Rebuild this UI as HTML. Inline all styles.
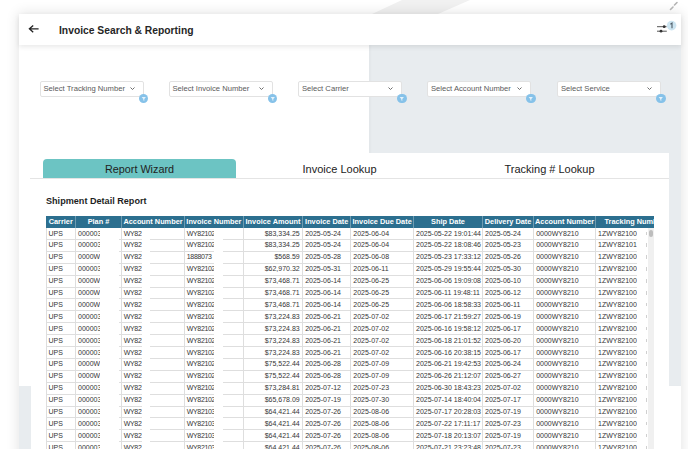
<!DOCTYPE html>
<html><head><meta charset="utf-8">
<style>
*{margin:0;padding:0;box-sizing:border-box}
html,body{width:688px;height:449px;overflow:hidden;background:#fff;font-family:"Liberation Sans",sans-serif;position:relative}
.abs{position:absolute}
#card{position:absolute;left:19px;top:14px;width:662px;height:460px;background:#fff;box-shadow:0 0 12px 1px rgba(0,0,0,0.11)}
#hdr{position:absolute;left:19px;top:14px;width:662px;height:31px;background:#fff;box-shadow:0 2px 5px rgba(0,0,0,0.09);z-index:3}
.title{position:absolute;left:59px;top:25.3px;font-size:10.3px;font-weight:bold;color:#262626;white-space:nowrap;z-index:4}
.grayR{position:absolute;left:369px;top:45px;width:312px;height:341px;background:#e8ecef;box-shadow:inset 2px 0 2px rgba(0,0,0,0.025)}
.grayL{position:absolute;left:19px;top:386px;width:11.5px;height:63px;background:#e8ecef}
.panel{position:absolute;left:31px;top:153px;width:638px;height:300px;background:#fff}
.dd{position:absolute;top:81px;width:104px;height:15.5px;background:#fff;border:1px solid #e2e2e2;border-radius:2px;font-size:7.65px;color:#5a5a5a;line-height:13.5px;padding-left:3px;white-space:nowrap}
.chev{position:absolute;right:7.8px;top:5.4px;width:5px;height:3px}
.badge{position:absolute;width:9.6px;height:9.6px;border-radius:50%;background:#86c2e9;top:93.7px}
.badge svg{display:block}
.tab1{position:absolute;left:43px;top:159px;width:193px;height:19px;background:#6cc4c3;border-radius:4px 4px 0 0}
.tabt{position:absolute;top:162px;font-size:10.8px;color:#222;white-space:nowrap;line-height:14px}
.tabline{position:absolute;left:30px;top:177.5px;width:639px;height:1px;background:#e4e4e4}
.rpt{position:absolute;left:46px;top:195.8px;font-size:9.1px;font-weight:bold;color:#1e1e1e;white-space:nowrap}
.th-bg{position:absolute;background:#2c6f8f}
.th{position:absolute;color:#fff;font-weight:bold;font-size:7.35px;text-align:center;line-height:11.5px;white-space:nowrap;overflow:hidden}
.th-line{position:absolute;width:1px;background:#6d9bb1}
.td{position:absolute;font-size:7px;color:#363636;line-height:12px;white-space:nowrap}
.hl{position:absolute;height:1px;background:#dedede}
.fm{position:absolute;width:1px;height:3.5px;background:#d0d0d0;z-index:2}
.vl{position:absolute;width:1px;background:#dedede}
.redact{position:absolute;background:#fff;top:227.5px;height:230px}
.sbtrack{position:absolute;left:648px;top:227.5px;width:6px;height:230px;background:#f0f0f0}
.sbthumb{position:absolute;left:649px;top:229.5px;width:3.8px;height:7.5px;background:#bdbdbd;border-radius:2px}
#table{position:absolute;left:0;top:0;width:688px;height:449px;overflow:hidden}
</style></head><body>
<svg class="abs" style="left:0;top:0" width="688" height="20"><polygon points="372,14 402,0 470,0 438,14" fill="#f1f1f1"/></svg>
<div id="card"></div>
<div class="grayR"></div>
<div class="grayL"></div>
<div id="hdr"></div>
<svg class="abs" style="left:27px;top:24px;z-index:5" width="14" height="10"><path d="M2.4 4.8 H11.6 M6.2 1.4 L2.4 4.8 L6.2 8.2" stroke="#222" stroke-width="1.3" fill="none"/></svg>
<div class="title">Invoice Search &amp; Reporting</div>
<svg class="abs" style="left:655px;top:19px;z-index:5" width="24" height="16"><path d="M2 7.7 H11.6 M2 12.2 H11.8" stroke="#555" stroke-width="1"/><circle cx="9.2" cy="7.7" r="1.4" fill="#333"/><circle cx="6" cy="12.2" r="1.4" fill="#333"/><circle cx="16.6" cy="6.6" r="4.8" fill="#cde5f1"/><path d="M15.4 5.2 L17 4 V9.2" stroke="#4f5d68" stroke-width="1.1" fill="none"/></svg>
<svg class="abs" style="left:664px;top:0px" width="20" height="14"><path d="M6.5 9.5 L9 7 M10.5 5 L13 2.5" stroke="#b4b4b4" stroke-width="1.6" stroke-linecap="round"/></svg>
<div class="dd" style="left:39.5px">Select Tracking Number<svg class="chev" viewBox="0 0 5 3"><path d="M0.5 0.5 L2.5 2.5 L4.5 0.5" stroke="#666" stroke-width="0.95" fill="none"/></svg></div>
<div class="badge" style="left:138.60000000000002px"><svg width="9.6" height="9.6" viewBox="0 0 10 10"><path d="M2.8 3.2 H7.2 L5.5 5.3 V7.2 L4.5 6.6 V5.3 Z" fill="#e6f3fb"/></svg></div>
<div class="dd" style="left:168.5px">Select Invoice Number<svg class="chev" viewBox="0 0 5 3"><path d="M0.5 0.5 L2.5 2.5 L4.5 0.5" stroke="#666" stroke-width="0.95" fill="none"/></svg></div>
<div class="badge" style="left:267.6px"><svg width="9.6" height="9.6" viewBox="0 0 10 10"><path d="M2.8 3.2 H7.2 L5.5 5.3 V7.2 L4.5 6.6 V5.3 Z" fill="#e6f3fb"/></svg></div>
<div class="dd" style="left:298px">Select Carrier<svg class="chev" viewBox="0 0 5 3"><path d="M0.5 0.5 L2.5 2.5 L4.5 0.5" stroke="#666" stroke-width="0.95" fill="none"/></svg></div>
<div class="badge" style="left:397.1px"><svg width="9.6" height="9.6" viewBox="0 0 10 10"><path d="M2.8 3.2 H7.2 L5.5 5.3 V7.2 L4.5 6.6 V5.3 Z" fill="#e6f3fb"/></svg></div>
<div class="dd" style="left:427px">Select Account Number<svg class="chev" viewBox="0 0 5 3"><path d="M0.5 0.5 L2.5 2.5 L4.5 0.5" stroke="#666" stroke-width="0.95" fill="none"/></svg></div>
<div class="badge" style="left:526.0999999999999px"><svg width="9.6" height="9.6" viewBox="0 0 10 10"><path d="M2.8 3.2 H7.2 L5.5 5.3 V7.2 L4.5 6.6 V5.3 Z" fill="#e6f3fb"/></svg></div>
<div class="dd" style="left:557px">Select Service<svg class="chev" viewBox="0 0 5 3"><path d="M0.5 0.5 L2.5 2.5 L4.5 0.5" stroke="#666" stroke-width="0.95" fill="none"/></svg></div>
<div class="badge" style="left:656.0999999999999px"><svg width="9.6" height="9.6" viewBox="0 0 10 10"><path d="M2.8 3.2 H7.2 L5.5 5.3 V7.2 L4.5 6.6 V5.3 Z" fill="#e6f3fb"/></svg></div>
<div class="panel"></div>
<div class="tab1"></div>
<div class="tabt" style="left:105px">Report Wizard</div>
<div class="tabt" style="left:302.5px;font-size:11px">Invoice Lookup</div>
<div class="tabt" style="left:504.5px;font-size:11px">Tracking # Lookup</div>
<div class="tabline"></div>
<div class="rpt">Shipment Detail Report</div>
<div id="table">
<div class="th-bg" style="left:46px;top:216px;width:607.7px;height:11.5px"></div>
<div class="th" style="left:46px;top:216px;width:29.5px;height:11.5px">Carrier</div>
<div class="th" style="left:75.5px;top:216px;width:46.0px;height:11.5px">Plan #</div>
<div class="th-line" style="left:75.0px;top:216px;height:11.5px"></div>
<div class="th" style="left:121.5px;top:216px;width:63.0px;height:11.5px">Account Number</div>
<div class="th-line" style="left:121.0px;top:216px;height:11.5px"></div>
<div class="th" style="left:184.5px;top:216px;width:58.80000000000001px;height:11.5px">Invoice Number</div>
<div class="th-line" style="left:184.0px;top:216px;height:11.5px"></div>
<div class="th" style="left:243.3px;top:216px;width:59.39999999999998px;height:11.5px">Invoice Amount</div>
<div class="th-line" style="left:242.8px;top:216px;height:11.5px"></div>
<div class="th" style="left:302.7px;top:216px;width:48.10000000000002px;height:11.5px">Invoice Date</div>
<div class="th-line" style="left:302.2px;top:216px;height:11.5px"></div>
<div class="th" style="left:350.8px;top:216px;width:62.69999999999999px;height:11.5px">Invoice Due Date</div>
<div class="th-line" style="left:350.3px;top:216px;height:11.5px"></div>
<div class="th" style="left:413.5px;top:216px;width:69.0px;height:11.5px">Ship Date</div>
<div class="th-line" style="left:413.0px;top:216px;height:11.5px"></div>
<div class="th" style="left:482.5px;top:216px;width:51.200000000000045px;height:11.5px">Delivery Date</div>
<div class="th-line" style="left:482.0px;top:216px;height:11.5px"></div>
<div class="th" style="left:533.7px;top:216px;width:61.799999999999955px;height:11.5px">Account Number</div>
<div class="th-line" style="left:533.2px;top:216px;height:11.5px"></div>
<div class="th" style="left:595.5px;top:216px;width:104.5px;height:11.5px;text-align:left;padding-left:9px">Tracking Number</div>
<div class="th-line" style="left:595.0px;top:216px;height:11.5px"></div>
<div class="td" style="left:48.5px;top:227.5px">UPS</div>
<div class="td" style="left:78.0px;top:227.5px">000003</div>
<div class="td" style="left:123.8px;top:227.5px;letter-spacing:-0.35px">WY82</div>
<div class="td" style="left:186.8px;top:227.5px;letter-spacing:-0.35px">WY82102</div>
<div class="td" style="left:243.3px;top:227.5px;width:56.39999999999998px;text-align:right">$83,334.25</div>
<div class="td" style="left:305.2px;top:227.5px">2025-05-24</div>
<div class="td" style="left:353.3px;top:227.5px">2025-06-04</div>
<div class="td" style="left:416.0px;top:227.5px">2025-05-22 19:01:44</div>
<div class="td" style="left:485.0px;top:227.5px">2025-05-24</div>
<div class="td" style="left:536.2px;top:227.5px">0000WY8210</div>
<div class="td" style="left:598.0px;top:227.5px">1ZWY82100</div>
<div class="fm" style="left:646px;top:231.5px"></div>
<div class="hl" style="left:46px;top:238.9px;width:591px"></div>
<div class="td" style="left:48.5px;top:239.4px">UPS</div>
<div class="td" style="left:78.0px;top:239.4px">000003</div>
<div class="td" style="left:123.8px;top:239.4px;letter-spacing:-0.35px">WY82</div>
<div class="td" style="left:186.8px;top:239.4px;letter-spacing:-0.35px">WY82102</div>
<div class="td" style="left:243.3px;top:239.4px;width:56.39999999999998px;text-align:right">$83,334.25</div>
<div class="td" style="left:305.2px;top:239.4px">2025-05-24</div>
<div class="td" style="left:353.3px;top:239.4px">2025-06-04</div>
<div class="td" style="left:416.0px;top:239.4px">2025-05-22 18:08:46</div>
<div class="td" style="left:485.0px;top:239.4px">2025-05-23</div>
<div class="td" style="left:536.2px;top:239.4px">0000WY8210</div>
<div class="td" style="left:598.0px;top:239.4px">1ZWY82101</div>
<div class="fm" style="left:646px;top:243.4px"></div>
<div class="hl" style="left:46px;top:250.8px;width:591px"></div>
<div class="td" style="left:48.5px;top:251.3px">UPS</div>
<div class="td" style="left:78.0px;top:251.3px">0000W</div>
<div class="td" style="left:123.8px;top:251.3px;letter-spacing:-0.35px">WY82</div>
<div class="td" style="left:186.8px;top:251.3px;letter-spacing:-0.35px">1888073</div>
<div class="td" style="left:243.3px;top:251.3px;width:56.39999999999998px;text-align:right">$568.59</div>
<div class="td" style="left:305.2px;top:251.3px">2025-05-28</div>
<div class="td" style="left:353.3px;top:251.3px">2025-06-08</div>
<div class="td" style="left:416.0px;top:251.3px">2025-05-23 17:33:12</div>
<div class="td" style="left:485.0px;top:251.3px">2025-05-26</div>
<div class="td" style="left:536.2px;top:251.3px">0000WY8210</div>
<div class="td" style="left:598.0px;top:251.3px">1ZWY82100</div>
<div class="fm" style="left:646px;top:255.3px"></div>
<div class="hl" style="left:46px;top:262.7px;width:591px"></div>
<div class="td" style="left:48.5px;top:263.2px">UPS</div>
<div class="td" style="left:78.0px;top:263.2px">000003</div>
<div class="td" style="left:123.8px;top:263.2px;letter-spacing:-0.35px">WY82</div>
<div class="td" style="left:186.8px;top:263.2px;letter-spacing:-0.35px">WY82102</div>
<div class="td" style="left:243.3px;top:263.2px;width:56.39999999999998px;text-align:right">$62,970.32</div>
<div class="td" style="left:305.2px;top:263.2px">2025-05-31</div>
<div class="td" style="left:353.3px;top:263.2px">2025-06-11</div>
<div class="td" style="left:416.0px;top:263.2px">2025-05-29 19:55:44</div>
<div class="td" style="left:485.0px;top:263.2px">2025-05-30</div>
<div class="td" style="left:536.2px;top:263.2px">0000WY8210</div>
<div class="td" style="left:598.0px;top:263.2px">1ZWY82100</div>
<div class="fm" style="left:646px;top:267.2px"></div>
<div class="hl" style="left:46px;top:274.59999999999997px;width:591px"></div>
<div class="td" style="left:48.5px;top:275.1px">UPS</div>
<div class="td" style="left:78.0px;top:275.1px">0000W</div>
<div class="td" style="left:123.8px;top:275.1px;letter-spacing:-0.35px">WY82</div>
<div class="td" style="left:186.8px;top:275.1px;letter-spacing:-0.35px">WY82102</div>
<div class="td" style="left:243.3px;top:275.1px;width:56.39999999999998px;text-align:right">$73,468.71</div>
<div class="td" style="left:305.2px;top:275.1px">2025-06-14</div>
<div class="td" style="left:353.3px;top:275.1px">2025-06-25</div>
<div class="td" style="left:416.0px;top:275.1px">2025-06-06 19:09:08</div>
<div class="td" style="left:485.0px;top:275.1px">2025-06-10</div>
<div class="td" style="left:536.2px;top:275.1px">0000WY8210</div>
<div class="td" style="left:598.0px;top:275.1px">1ZWY82100</div>
<div class="fm" style="left:646px;top:279.1px"></div>
<div class="hl" style="left:46px;top:286.5px;width:591px"></div>
<div class="td" style="left:48.5px;top:287.0px">UPS</div>
<div class="td" style="left:78.0px;top:287.0px">0000W</div>
<div class="td" style="left:123.8px;top:287.0px;letter-spacing:-0.35px">WY82</div>
<div class="td" style="left:186.8px;top:287.0px;letter-spacing:-0.35px">WY82102</div>
<div class="td" style="left:243.3px;top:287.0px;width:56.39999999999998px;text-align:right">$73,468.71</div>
<div class="td" style="left:305.2px;top:287.0px">2025-06-14</div>
<div class="td" style="left:353.3px;top:287.0px">2025-06-25</div>
<div class="td" style="left:416.0px;top:287.0px">2025-06-11 19:48:11</div>
<div class="td" style="left:485.0px;top:287.0px">2025-06-12</div>
<div class="td" style="left:536.2px;top:287.0px">0000WY8210</div>
<div class="td" style="left:598.0px;top:287.0px">1ZWY82100</div>
<div class="fm" style="left:646px;top:291.0px"></div>
<div class="hl" style="left:46px;top:298.4px;width:591px"></div>
<div class="td" style="left:48.5px;top:298.9px">UPS</div>
<div class="td" style="left:78.0px;top:298.9px">0000W</div>
<div class="td" style="left:123.8px;top:298.9px;letter-spacing:-0.35px">WY82</div>
<div class="td" style="left:186.8px;top:298.9px;letter-spacing:-0.35px">WY82102</div>
<div class="td" style="left:243.3px;top:298.9px;width:56.39999999999998px;text-align:right">$73,468.71</div>
<div class="td" style="left:305.2px;top:298.9px">2025-06-14</div>
<div class="td" style="left:353.3px;top:298.9px">2025-06-25</div>
<div class="td" style="left:416.0px;top:298.9px">2025-06-06 18:58:33</div>
<div class="td" style="left:485.0px;top:298.9px">2025-06-11</div>
<div class="td" style="left:536.2px;top:298.9px">0000WY8210</div>
<div class="td" style="left:598.0px;top:298.9px">1ZWY82100</div>
<div class="fm" style="left:646px;top:302.9px"></div>
<div class="hl" style="left:46px;top:310.29999999999995px;width:591px"></div>
<div class="td" style="left:48.5px;top:310.8px">UPS</div>
<div class="td" style="left:78.0px;top:310.8px">000003</div>
<div class="td" style="left:123.8px;top:310.8px;letter-spacing:-0.35px">WY82</div>
<div class="td" style="left:186.8px;top:310.8px;letter-spacing:-0.35px">WY82102</div>
<div class="td" style="left:243.3px;top:310.8px;width:56.39999999999998px;text-align:right">$73,224.83</div>
<div class="td" style="left:305.2px;top:310.8px">2025-06-21</div>
<div class="td" style="left:353.3px;top:310.8px">2025-07-02</div>
<div class="td" style="left:416.0px;top:310.8px">2025-06-17 21:59:27</div>
<div class="td" style="left:485.0px;top:310.8px">2025-06-19</div>
<div class="td" style="left:536.2px;top:310.8px">0000WY8210</div>
<div class="td" style="left:598.0px;top:310.8px">1ZWY82100</div>
<div class="fm" style="left:646px;top:314.8px"></div>
<div class="hl" style="left:46px;top:322.2px;width:591px"></div>
<div class="td" style="left:48.5px;top:322.7px">UPS</div>
<div class="td" style="left:78.0px;top:322.7px">000003</div>
<div class="td" style="left:123.8px;top:322.7px;letter-spacing:-0.35px">WY82</div>
<div class="td" style="left:186.8px;top:322.7px;letter-spacing:-0.35px">WY82102</div>
<div class="td" style="left:243.3px;top:322.7px;width:56.39999999999998px;text-align:right">$73,224.83</div>
<div class="td" style="left:305.2px;top:322.7px">2025-06-21</div>
<div class="td" style="left:353.3px;top:322.7px">2025-07-02</div>
<div class="td" style="left:416.0px;top:322.7px">2025-06-16 19:58:12</div>
<div class="td" style="left:485.0px;top:322.7px">2025-06-17</div>
<div class="td" style="left:536.2px;top:322.7px">0000WY8210</div>
<div class="td" style="left:598.0px;top:322.7px">1ZWY82100</div>
<div class="fm" style="left:646px;top:326.7px"></div>
<div class="hl" style="left:46px;top:334.09999999999997px;width:591px"></div>
<div class="td" style="left:48.5px;top:334.6px">UPS</div>
<div class="td" style="left:78.0px;top:334.6px">000003</div>
<div class="td" style="left:123.8px;top:334.6px;letter-spacing:-0.35px">WY82</div>
<div class="td" style="left:186.8px;top:334.6px;letter-spacing:-0.35px">WY82102</div>
<div class="td" style="left:243.3px;top:334.6px;width:56.39999999999998px;text-align:right">$73,224.83</div>
<div class="td" style="left:305.2px;top:334.6px">2025-06-21</div>
<div class="td" style="left:353.3px;top:334.6px">2025-07-02</div>
<div class="td" style="left:416.0px;top:334.6px">2025-06-18 21:01:52</div>
<div class="td" style="left:485.0px;top:334.6px">2025-06-20</div>
<div class="td" style="left:536.2px;top:334.6px">0000WY8210</div>
<div class="td" style="left:598.0px;top:334.6px">1ZWY82100</div>
<div class="fm" style="left:646px;top:338.6px"></div>
<div class="hl" style="left:46px;top:346.0px;width:591px"></div>
<div class="td" style="left:48.5px;top:346.5px">UPS</div>
<div class="td" style="left:78.0px;top:346.5px">000003</div>
<div class="td" style="left:123.8px;top:346.5px;letter-spacing:-0.35px">WY82</div>
<div class="td" style="left:186.8px;top:346.5px;letter-spacing:-0.35px">WY82102</div>
<div class="td" style="left:243.3px;top:346.5px;width:56.39999999999998px;text-align:right">$73,224.83</div>
<div class="td" style="left:305.2px;top:346.5px">2025-06-21</div>
<div class="td" style="left:353.3px;top:346.5px">2025-07-02</div>
<div class="td" style="left:416.0px;top:346.5px">2025-06-16 20:38:15</div>
<div class="td" style="left:485.0px;top:346.5px">2025-06-17</div>
<div class="td" style="left:536.2px;top:346.5px">0000WY8210</div>
<div class="td" style="left:598.0px;top:346.5px">1ZWY82100</div>
<div class="fm" style="left:646px;top:350.5px"></div>
<div class="hl" style="left:46px;top:357.9px;width:591px"></div>
<div class="td" style="left:48.5px;top:358.4px">UPS</div>
<div class="td" style="left:78.0px;top:358.4px">0000W</div>
<div class="td" style="left:123.8px;top:358.4px;letter-spacing:-0.35px">WY82</div>
<div class="td" style="left:186.8px;top:358.4px;letter-spacing:-0.35px">WY82102</div>
<div class="td" style="left:243.3px;top:358.4px;width:56.39999999999998px;text-align:right">$75,522.44</div>
<div class="td" style="left:305.2px;top:358.4px">2025-06-28</div>
<div class="td" style="left:353.3px;top:358.4px">2025-07-09</div>
<div class="td" style="left:416.0px;top:358.4px">2025-06-21 19:42:53</div>
<div class="td" style="left:485.0px;top:358.4px">2025-06-24</div>
<div class="td" style="left:536.2px;top:358.4px">0000WY8210</div>
<div class="td" style="left:598.0px;top:358.4px">1ZWY82100</div>
<div class="fm" style="left:646px;top:362.4px"></div>
<div class="hl" style="left:46px;top:369.79999999999995px;width:591px"></div>
<div class="td" style="left:48.5px;top:370.3px">UPS</div>
<div class="td" style="left:78.0px;top:370.3px">0000W</div>
<div class="td" style="left:123.8px;top:370.3px;letter-spacing:-0.35px">WY82</div>
<div class="td" style="left:186.8px;top:370.3px;letter-spacing:-0.35px">WY82102</div>
<div class="td" style="left:243.3px;top:370.3px;width:56.39999999999998px;text-align:right">$75,522.44</div>
<div class="td" style="left:305.2px;top:370.3px">2025-06-28</div>
<div class="td" style="left:353.3px;top:370.3px">2025-07-09</div>
<div class="td" style="left:416.0px;top:370.3px">2025-06-26 21:12:07</div>
<div class="td" style="left:485.0px;top:370.3px">2025-06-27</div>
<div class="td" style="left:536.2px;top:370.3px">0000WY8210</div>
<div class="td" style="left:598.0px;top:370.3px">1ZWY82100</div>
<div class="fm" style="left:646px;top:374.3px"></div>
<div class="hl" style="left:46px;top:381.7px;width:591px"></div>
<div class="td" style="left:48.5px;top:382.20000000000005px">UPS</div>
<div class="td" style="left:78.0px;top:382.20000000000005px">000003</div>
<div class="td" style="left:123.8px;top:382.20000000000005px;letter-spacing:-0.35px">WY82</div>
<div class="td" style="left:186.8px;top:382.20000000000005px;letter-spacing:-0.35px">WY82102</div>
<div class="td" style="left:243.3px;top:382.20000000000005px;width:56.39999999999998px;text-align:right">$73,284.81</div>
<div class="td" style="left:305.2px;top:382.20000000000005px">2025-07-12</div>
<div class="td" style="left:353.3px;top:382.20000000000005px">2025-07-23</div>
<div class="td" style="left:416.0px;top:382.20000000000005px">2025-06-30 18:43:23</div>
<div class="td" style="left:485.0px;top:382.20000000000005px">2025-07-02</div>
<div class="td" style="left:536.2px;top:382.20000000000005px">0000WY8210</div>
<div class="td" style="left:598.0px;top:382.20000000000005px">1ZWY82100</div>
<div class="fm" style="left:646px;top:386.20000000000005px"></div>
<div class="hl" style="left:46px;top:393.6px;width:591px"></div>
<div class="td" style="left:48.5px;top:394.1px">UPS</div>
<div class="td" style="left:78.0px;top:394.1px">000003</div>
<div class="td" style="left:123.8px;top:394.1px;letter-spacing:-0.35px">WY82</div>
<div class="td" style="left:186.8px;top:394.1px;letter-spacing:-0.35px">WY82102</div>
<div class="td" style="left:243.3px;top:394.1px;width:56.39999999999998px;text-align:right">$65,678.09</div>
<div class="td" style="left:305.2px;top:394.1px">2025-07-19</div>
<div class="td" style="left:353.3px;top:394.1px">2025-07-30</div>
<div class="td" style="left:416.0px;top:394.1px">2025-07-14 18:40:04</div>
<div class="td" style="left:485.0px;top:394.1px">2025-07-17</div>
<div class="td" style="left:536.2px;top:394.1px">0000WY8210</div>
<div class="td" style="left:598.0px;top:394.1px">1ZWY82100</div>
<div class="fm" style="left:646px;top:398.1px"></div>
<div class="hl" style="left:46px;top:405.5px;width:591px"></div>
<div class="td" style="left:48.5px;top:406.0px">UPS</div>
<div class="td" style="left:78.0px;top:406.0px">000003</div>
<div class="td" style="left:123.8px;top:406.0px;letter-spacing:-0.35px">WY82</div>
<div class="td" style="left:186.8px;top:406.0px;letter-spacing:-0.35px">WY82103</div>
<div class="td" style="left:243.3px;top:406.0px;width:56.39999999999998px;text-align:right">$64,421.44</div>
<div class="td" style="left:305.2px;top:406.0px">2025-07-26</div>
<div class="td" style="left:353.3px;top:406.0px">2025-08-06</div>
<div class="td" style="left:416.0px;top:406.0px">2025-07-17 20:28:03</div>
<div class="td" style="left:485.0px;top:406.0px">2025-07-19</div>
<div class="td" style="left:536.2px;top:406.0px">0000WY8210</div>
<div class="td" style="left:598.0px;top:406.0px">1ZWY82100</div>
<div class="fm" style="left:646px;top:410.0px"></div>
<div class="hl" style="left:46px;top:417.4px;width:591px"></div>
<div class="td" style="left:48.5px;top:417.9px">UPS</div>
<div class="td" style="left:78.0px;top:417.9px">000003</div>
<div class="td" style="left:123.8px;top:417.9px;letter-spacing:-0.35px">WY82</div>
<div class="td" style="left:186.8px;top:417.9px;letter-spacing:-0.35px">WY82103</div>
<div class="td" style="left:243.3px;top:417.9px;width:56.39999999999998px;text-align:right">$64,421.44</div>
<div class="td" style="left:305.2px;top:417.9px">2025-07-26</div>
<div class="td" style="left:353.3px;top:417.9px">2025-08-06</div>
<div class="td" style="left:416.0px;top:417.9px">2025-07-22 17:11:17</div>
<div class="td" style="left:485.0px;top:417.9px">2025-07-23</div>
<div class="td" style="left:536.2px;top:417.9px">0000WY8210</div>
<div class="td" style="left:598.0px;top:417.9px">1ZWY82100</div>
<div class="fm" style="left:646px;top:421.9px"></div>
<div class="hl" style="left:46px;top:429.29999999999995px;width:591px"></div>
<div class="td" style="left:48.5px;top:429.8px">UPS</div>
<div class="td" style="left:78.0px;top:429.8px">000003</div>
<div class="td" style="left:123.8px;top:429.8px;letter-spacing:-0.35px">WY82</div>
<div class="td" style="left:186.8px;top:429.8px;letter-spacing:-0.35px">WY82103</div>
<div class="td" style="left:243.3px;top:429.8px;width:56.39999999999998px;text-align:right">$64,421.44</div>
<div class="td" style="left:305.2px;top:429.8px">2025-07-26</div>
<div class="td" style="left:353.3px;top:429.8px">2025-08-06</div>
<div class="td" style="left:416.0px;top:429.8px">2025-07-18 20:13:07</div>
<div class="td" style="left:485.0px;top:429.8px">2025-07-19</div>
<div class="td" style="left:536.2px;top:429.8px">0000WY8210</div>
<div class="td" style="left:598.0px;top:429.8px">1ZWY82100</div>
<div class="fm" style="left:646px;top:433.8px"></div>
<div class="hl" style="left:46px;top:441.2px;width:591px"></div>
<div class="td" style="left:48.5px;top:441.70000000000005px">UPS</div>
<div class="td" style="left:78.0px;top:441.70000000000005px">000003</div>
<div class="td" style="left:123.8px;top:441.70000000000005px;letter-spacing:-0.35px">WY82</div>
<div class="td" style="left:186.8px;top:441.70000000000005px;letter-spacing:-0.35px">WY82103</div>
<div class="td" style="left:243.3px;top:441.70000000000005px;width:56.39999999999998px;text-align:right">$64,421.44</div>
<div class="td" style="left:305.2px;top:441.70000000000005px">2025-07-26</div>
<div class="td" style="left:353.3px;top:441.70000000000005px">2025-08-06</div>
<div class="td" style="left:416.0px;top:441.70000000000005px">2025-07-21 23:23:48</div>
<div class="td" style="left:485.0px;top:441.70000000000005px">2025-07-23</div>
<div class="td" style="left:536.2px;top:441.70000000000005px">0000WY8210</div>
<div class="td" style="left:598.0px;top:441.70000000000005px">1ZWY82100</div>
<div class="fm" style="left:646px;top:445.70000000000005px"></div>
<div class="hl" style="left:46px;top:453.1px;width:591px"></div>
<div class="vl" style="left:45.5px;top:227.5px;height:221.5px"></div>
<div class="vl" style="left:75.0px;top:227.5px;height:221.5px"></div>
<div class="vl" style="left:121.0px;top:227.5px;height:221.5px"></div>
<div class="vl" style="left:184.0px;top:227.5px;height:221.5px"></div>
<div class="vl" style="left:242.8px;top:227.5px;height:221.5px"></div>
<div class="vl" style="left:302.2px;top:227.5px;height:221.5px"></div>
<div class="vl" style="left:350.3px;top:227.5px;height:221.5px"></div>
<div class="vl" style="left:413.0px;top:227.5px;height:221.5px"></div>
<div class="vl" style="left:482.0px;top:227.5px;height:221.5px"></div>
<div class="vl" style="left:533.2px;top:227.5px;height:221.5px"></div>
<div class="vl" style="left:595.0px;top:227.5px;height:221.5px"></div>
<div class="redact" style="left:100px;width:19px"></div>
<div class="redact" style="left:142px;width:8px"></div>
<div class="redact" style="left:214px;width:9px"></div>
<div class="redact" style="left:637px;width:9.5px"></div>
<div class="sbtrack"></div>
<div class="sbthumb"></div>
<div class="abs" style="left:654px;top:216px;width:15px;height:240px;background:#fff"></div>
</div>
</body></html>
